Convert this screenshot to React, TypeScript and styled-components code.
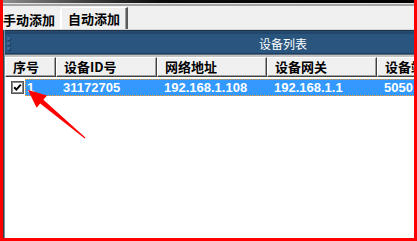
import React from "react";
import styled, { createGlobalStyle } from "styled-components";

const Global = createGlobalStyle`
  html, body { margin: 0; padding: 0; background: #ffffff; }
  body { font-family: "Noto Sans CJK SC", "Liberation Sans", sans-serif; }
`;

const CJK = `"Noto Sans CJK SC", "Liberation Sans", sans-serif`;
const LATIN = `"Liberation Sans", "Noto Sans CJK SC", sans-serif`;

const Frame = styled.div`
  position: relative;
  width: 417px;
  height: 241px;
  box-sizing: border-box;
  border: 3px solid #ff0000;
  border-top: none;
  display: flex;
  flex-direction: column;
  overflow: hidden;
  background: #ffffff;
`;

const TitleEdge = styled.div`
  height: 3px;
  flex: none;
  background: linear-gradient(to right, #8c8c8c 0px, #3a3a3a 90px, #0a0a0a 160px, #000000 100%);
`;

const EdgeLine = styled.div`
  height: 3px;
  flex: none;
  background: linear-gradient(#e6e6e6 0 1px, #a4a4a4 1px 3px);
`;

const TabStrip = styled.div`
  height: 23px;
  flex: none;
  background: #f0f0f0;
  display: flex;
  align-items: flex-end;
  border-bottom: 1px solid #d6d6d6;
`;

const Tab = styled.div<{ $active?: boolean }>`
  box-sizing: border-box;
  height: ${(p) => (p.$active ? 22 : 19)}px;
  padding: ${(p) => (p.$active ? "0 6px 0 6px" : "0 5px 0 0")};
  display: flex;
  align-items: ${(p) => (p.$active ? "flex-start" : "center")};
  padding-top: ${(p) => (p.$active ? "3px" : "0")};
  font-family: ${CJK};
  font-weight: 700;
  font-size: 13px;
  line-height: 15px;
  color: #000000;
  background: #f0f0f0;
  border-top: ${(p) => (p.$active ? "1px solid #ffffff" : "none")};
  border-left: ${(p) => (p.$active ? "1px solid #ffffff" : "none")};
  border-right: ${(p) => (p.$active ? "2px solid #5a5a5a" : "1px solid #ffffff")};
  box-shadow: ${(p) => (p.$active ? "inset -1px 0 0 #a0a0a0" : "none")};
  white-space: nowrap;
`;

const Panel = styled.div`
  flex: 1;
  display: flex;
  flex-direction: column;
  border-left: 1px solid #3c3c3c;
  overflow: hidden;
`;

const PanelInner = styled.div`
  flex: 1;
  display: flex;
  flex-direction: column;
  border-left: 1px solid #7890a8;
  width: 556px;
`;

const Band = styled.div`
  height: 24px;
  flex: none;
  display: grid;
  grid-template-columns: 8px 1fr 8px;
  align-items: center;
  background: linear-gradient(
    #1a3350 0 1px,
    #2c4a6a 1px 2px,
    #23466c 2px 4px,
    #29557f 4px calc(100% - 1px),
    #1d3e60 calc(100% - 1px)
  );
`;

const Grip = styled.div`
  display: flex;
  flex-direction: column;
  gap: 2px;
  padding-left: 2px;
  padding-top: 2px;
`;

const GripDot = styled.span`
  width: 3px;
  height: 3px;
  background: #3d6894;
  box-shadow: 1px 1px 0 #1f3f60;
`;

const BandTitle = styled.div`
  text-align: center;
  font-family: ${CJK};
  font-size: 12px;
  color: #ffffff;
  line-height: 14px;
  padding-top: 3px;
`;

const Divider = styled.div`
  height: 3px;
  flex: none;
  background: linear-gradient(#5d6d7d 0 1px, #c4c4c4 1px 3px);
`;

const HeaderRow = styled.div`
  display: flex;
  height: 20px;
  flex: none;
`;

const HeadCell = styled.div<{ $w: number }>`
  box-sizing: border-box;
  width: ${(p) => p.$w}px;
  flex: none;
  background: #f0f0f0;
  border-top: 1px solid #ffffff;
  border-left: 1px solid #ffffff;
  border-right: 1px solid #404040;
  border-bottom: 1px solid #404040;
  box-shadow: inset -1px -1px 0 #a0a0a0;
  padding-left: 7px;
  font-family: ${CJK};
  font-weight: 700;
  font-size: 13px;
  line-height: 18px;
  color: #000000;
  white-space: nowrap;
  overflow: hidden;
`;

const DataRow = styled.div`
  display: flex;
  height: 17px;
  margin-top: 2px;
  flex: none;
`;

const CheckCell = styled.div`
  width: 20px;
  flex: none;
  display: flex;
  align-items: center;
  padding-left: 6px;
  box-sizing: border-box;
  background: #ffffff;
`;

const CheckBox = styled.span`
  width: 13px;
  height: 13px;
  box-sizing: border-box;
  border: 1px solid #555555;
  box-shadow: inset 0 0 0 1px #8a8a8a;
  background: #ffffff;
  display: flex;
  align-items: center;
  justify-content: center;
`;

const Selection = styled.div`
  flex: 1;
  display: flex;
  background: #3399ff;
  outline: 1px dotted #ff9a2a;
  outline-offset: -1px;
`;

const DataCell = styled.div<{ $w: number; $pad?: number }>`
  width: ${(p) => p.$w}px;
  flex: none;
  box-sizing: border-box;
  padding-left: ${(p) => p.$pad ?? 7}px;
  font-family: ${LATIN};
  font-weight: 700;
  font-size: 13px;
  line-height: 17px;
  color: #ffffff;
  white-space: nowrap;
`;

const Arrow = styled.svg`
  position: absolute;
  left: 0;
  top: 0;
  width: 100px;
  height: 150px;
  pointer-events: none;
`;

const columns = [
  { title: "序号", w: 51 },
  { title: "设备ID号", w: 101 },
  { title: "网络地址", w: 110 },
  { title: "设备网关", w: 110 },
  { title: "设备端口", w: 110 },
  { title: "", w: 72 },
];

const row = ["31172705", "192.168.1.108", "192.168.1.1", "5050", ""];

export default function App() {
  return (
    <>
      <Global />
      <Frame>
        <TitleEdge />
        <EdgeLine />
        <TabStrip>
          <Tab>手动添加</Tab>
          <Tab $active>自动添加</Tab>
        </TabStrip>
        <Panel>
          <PanelInner>
            <Band>
              <Grip>
                <GripDot />
                <GripDot />
                <GripDot />
              </Grip>
              <BandTitle>设备列表</BandTitle>
              <span />
            </Band>
            <Divider />
            <HeaderRow>
              {columns.map((c, i) => (
                <HeadCell key={i} $w={c.w}>
                  {c.title}
                </HeadCell>
              ))}
            </HeaderRow>
            <DataRow>
              <CheckCell>
                <CheckBox>
                  <svg width="9" height="9" viewBox="0 0 9 9">
                    <path d="M1.2 4.2 L3.4 6.6 L7.8 1.6" fill="none" stroke="#000" strokeWidth="2" />
                  </svg>
                </CheckBox>
              </CheckCell>
              <Selection>
                <DataCell $w={31} $pad={2}>1</DataCell>
                {row.map((v, i) => (
                  <DataCell key={i} $w={columns[i + 1].w}>
                    {v}
                  </DataCell>
                ))}
              </Selection>
            </DataRow>
          </PanelInner>
        </Panel>
        <Arrow viewBox="0 0 100 150">
          <polygon
            points="25,90 44,95.5 40.4,99.7 82.3,137.6 81.7,138.4 37.2,103.5 33.6,107.7"
            fill="#ff0000"
          />
        </Arrow>
      </Frame>
    </>
  );
}
